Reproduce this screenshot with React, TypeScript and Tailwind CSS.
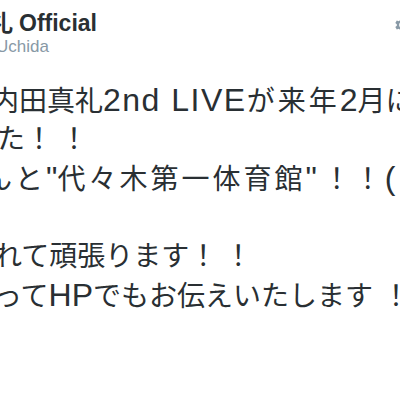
import React from "react";

const Gear = () => (
  <svg width="18" height="18" viewBox="0 0 24 24" fill="#8899a6">
    <path d="M19.4 13a7.6 7.6 0 0 0 0-2l2.1-1.6-2-3.5-2.5 1a7.4 7.4 0 0 0-1.7-1L15 3.3h-4l-.4 2.6a7.4 7.4 0 0 0-1.7 1l-2.5-1-2 3.5L6.5 11a7.6 7.6 0 0 0 0 2l-2.1 1.6 2 3.5 2.5-1a7.4 7.4 0 0 0 1.7 1l.4 2.6h4l.4-2.6a7.4 7.4 0 0 0 1.7-1l2.5 1 2-3.5zM13 15.5a3.5 3.5 0 1 1 0-7 3.5 3.5 0 0 1 0 7z" />
  </svg>
);

export default function App() {
  const body = "text-[28px] leading-[39px] h-[39px] text-[#292f33] whitespace-pre";
  return (
    <div
      className="w-[400px] h-[400px] bg-white overflow-hidden relative"
      style={{ fontFamily: '"Liberation Sans", "Noto Sans CJK JP", sans-serif' }}
    >
      <div className="flex items-start justify-between pt-[9px]">
        <div className="flex flex-col">
          <div className="ml-[-10px] text-[23px] leading-[28px] font-bold text-[#292f33] whitespace-pre flex items-baseline">
            <span>礼</span>
            <span className="ml-[6px]">Official</span>
          </div>
          <div className="ml-[-4px] text-[17px] leading-[20px] text-[#8899a6] whitespace-pre">
            Uchida
          </div>
        </div>
        <div className="mt-[7px] mr-[-10px]">
          <Gear />
        </div>
      </div>
      <div className="mt-[24px] flex flex-col">
        <div className={`${body} ml-[-9px]`}>
          内田真礼
          <span className="text-[32px] tracking-[1.5px]">2nd LIVE</span>
          <span className="tracking-[3px]">が来年</span>
          <span className="text-[32px]">2</span>月に決定
        </div>
        <div className={`${body} ml-[-3px]`}>
          た<span className="tracking-[7px]">！！</span>
        </div>
        <div className={`${body} ml-[-16px] tracking-[3px]`}>
          んと
          <span className="text-[32px] tracking-normal">"</span>
          代々木第一体育館
          <span className="text-[32px] tracking-normal">"</span>
          <span className="ml-[6px]">！！</span>
          <span className="text-[32px] tracking-normal">(</span>
        </div>
        <div className={body}> </div>
        <div className={`${body} ml-[-6px]`}>
          れて頑張ります<span className="tracking-[7px]">！！</span>
        </div>
        <div className={`${body} ml-[-6px]`}>
          って<span className="text-[32px]">HP</span>でもお伝えいたします
          <span className="ml-[9px]">！</span>
        </div>
      </div>
    </div>
  );
}
